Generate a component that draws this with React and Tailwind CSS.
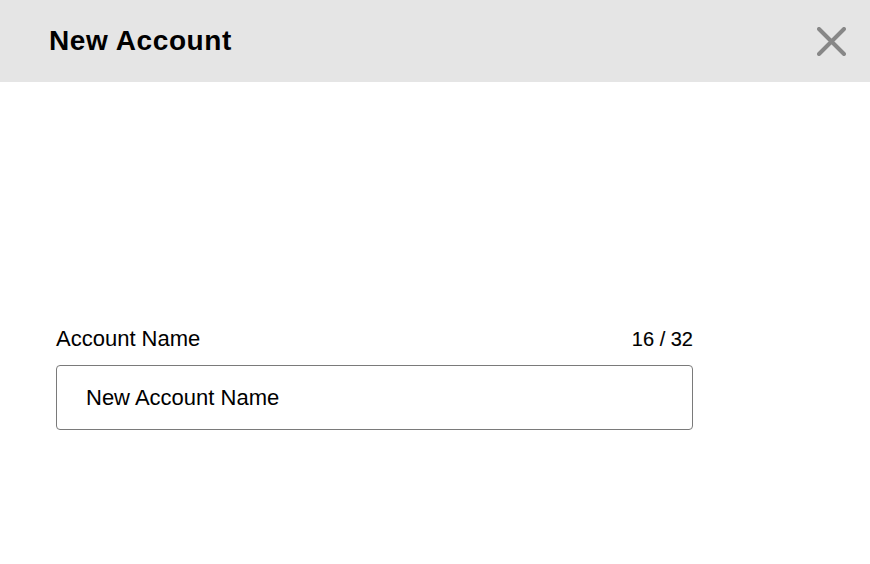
import React, { useState } from 'react';

export default function App() {
  const [name, setName] = useState('New Account Name');
  const max = 32;

  return (
    <div className="w-full h-[564px] bg-white font-['Liberation_Sans',Arial,sans-serif] text-black">
      {/* Header */}
      <header className="h-[82px] bg-[#e5e5e5] flex items-center justify-between pl-[49px] pr-[24px]">
        <h1 className="text-[28px] leading-[32px] font-bold tracking-[0.6px]">New Account</h1>
        <button aria-label="Close" className="w-[29px] h-[29px] flex items-center justify-center">
          <svg width="29" height="29" viewBox="0 0 29 29" fill="none">
            <path d="M2 2L27 27M27 2L2 27" stroke="#878787" strokeWidth="4" strokeLinecap="round" />
          </svg>
        </button>
      </header>

      {/* Form */}
      <main className="pt-[244px] pl-[56px]">
        <div className="w-[637px]">
          <div className="flex items-baseline justify-between h-[26px]">
            <label htmlFor="account-name" className="text-[22px] leading-[26px]">
              Account Name
            </label>
            <span className="text-[20px] leading-[26px] [-webkit-text-stroke:0.15px_black]">
              {name.length} / {max}
            </span>
          </div>
          <input
            id="account-name"
            value={name}
            maxLength={max}
            onChange={(e) => setName(e.target.value)}
            className="mt-[13px] w-full h-[65px] border border-[#7a7a7a] rounded-[4px] pl-[29px] pr-4 text-[22px] outline-none bg-white"
          />
        </div>
      </main>
    </div>
  );
}
